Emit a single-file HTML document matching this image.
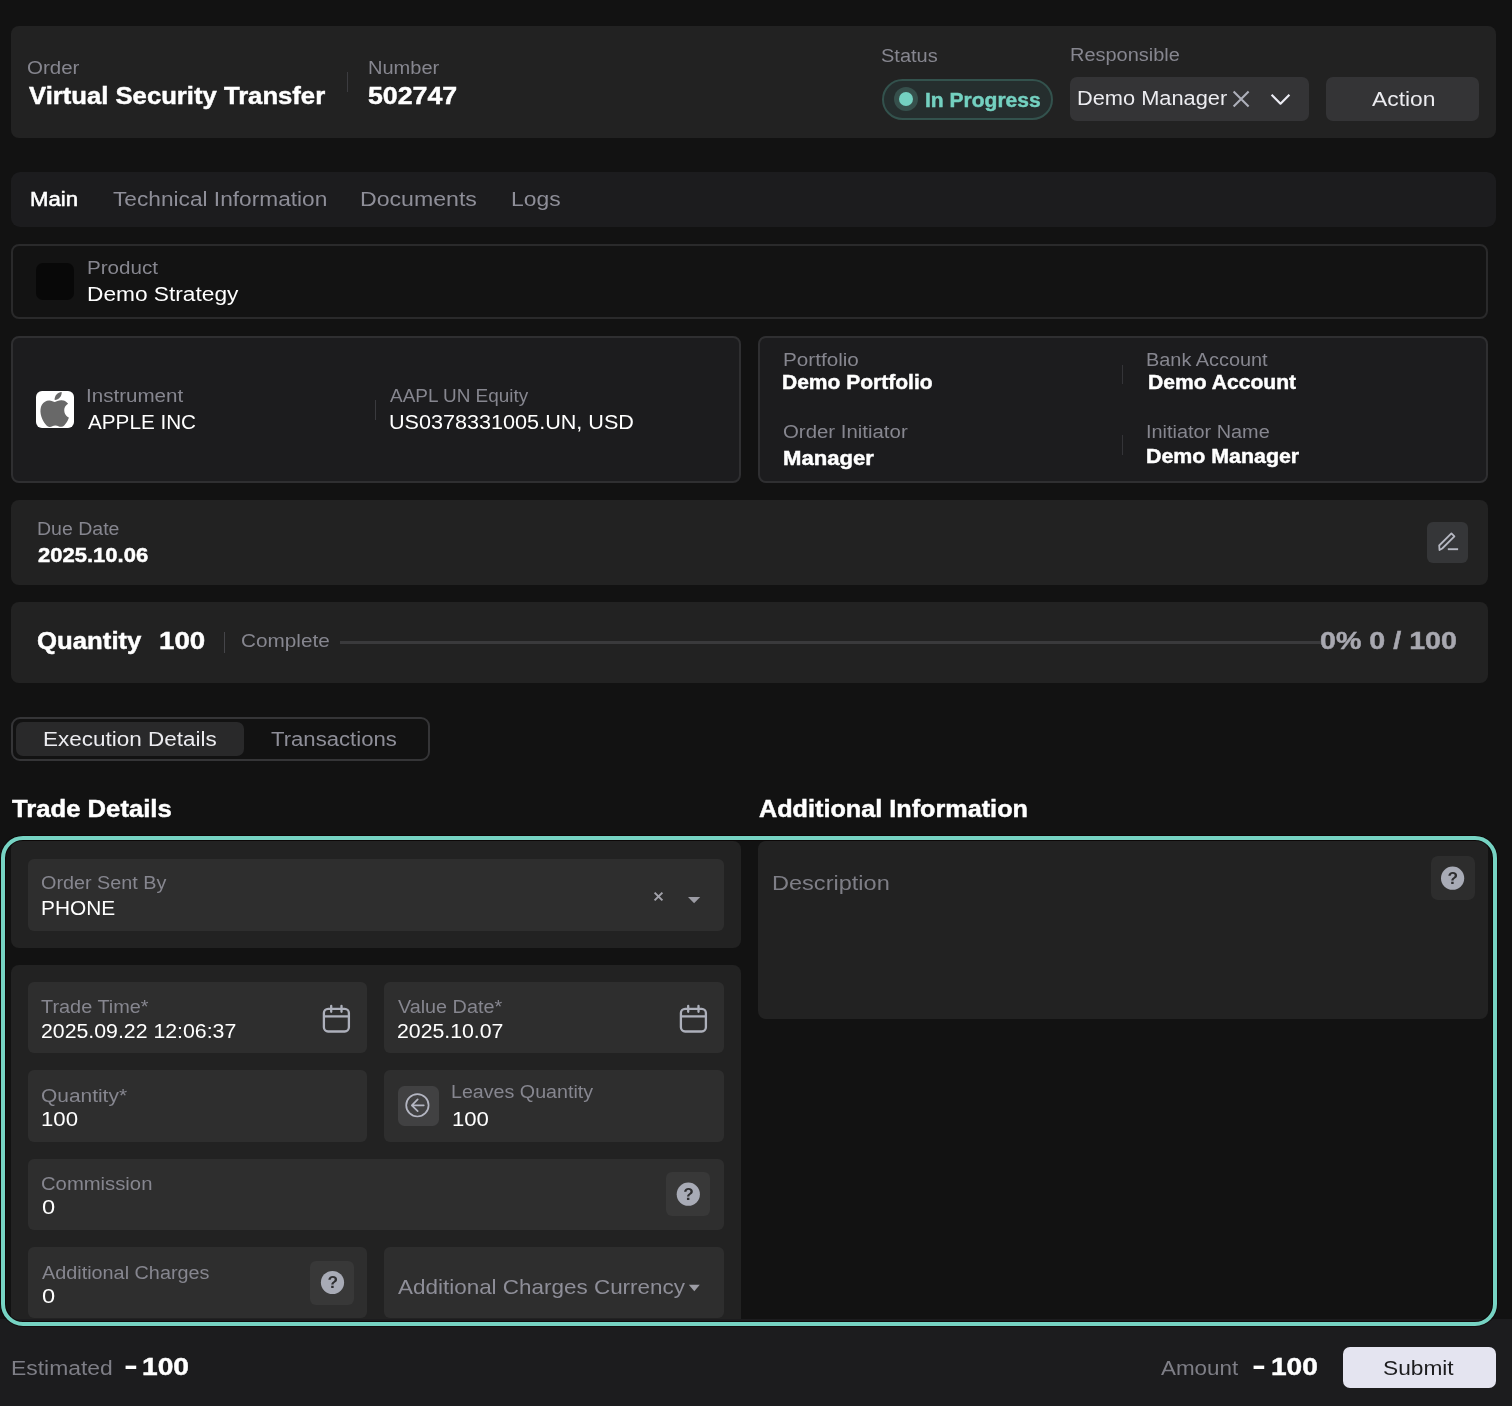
<!DOCTYPE html>
<html lang="en"><head><meta charset="utf-8"><title>Order 502747 - Virtual Security Transfer</title>
<style>
html,body{margin:0;padding:0}
body{width:1512px;height:1406px;background:#121212;position:relative;overflow:hidden;font-family:"Liberation Sans", sans-serif}
.b{position:absolute}
.t{position:absolute;white-space:pre;line-height:1;transform-origin:0 0;font-weight:400}
.ic{position:absolute;left:0;top:0;will-change:transform}
.tx{position:absolute;left:0;top:0;width:1512px;height:1406px;will-change:transform}
</style></head><body>
<div class="b" style="left:11px;top:26px;width:1484.5px;height:111.5px;background:#222222;border-radius:8px;"></div>
<div class="b" style="left:347px;top:72px;width:1px;height:20px;background:#3c3c40;border-radius:0px;"></div>
<div class="b" style="left:882px;top:79px;width:171px;height:41px;background:#252e2e;border-radius:21px;box-sizing:border-box;border:2px solid #33524d"></div>
<div class="b" style="left:894px;top:87px;width:24px;height:24px;background:#36504c;border-radius:12px;"></div>
<div class="b" style="left:898.7px;top:91.7px;width:14.6px;height:14.6px;background:#74d1c1;border-radius:8px;"></div>
<div class="b" style="left:1070px;top:77px;width:239px;height:44px;background:#343436;border-radius:7px;"></div>
<div class="b" style="left:1326px;top:77px;width:153px;height:44px;background:#343436;border-radius:7px;"></div>
<div class="b" style="left:11px;top:172px;width:1484.5px;height:54.5px;background:#1c1c1e;border-radius:9px;"></div>
<div class="b" style="left:11px;top:244px;width:1477px;height:75px;background:#131313;border-radius:8px;box-sizing:border-box;border:2px solid #2a2a2b"></div>
<div class="b" style="left:36px;top:263px;width:38px;height:37px;background:#080808;border-radius:7px;"></div>
<div class="b" style="left:11px;top:336px;width:730px;height:146.5px;background:#1c1c1e;border-radius:8px;box-sizing:border-box;border:2px solid #2f2f31"></div>
<div class="b" style="left:36px;top:391px;width:38px;height:37px;background:#ffffff;border-radius:6px;"></div>
<div class="b" style="left:375px;top:399.5px;width:1px;height:20px;background:#3a3a3e;border-radius:0px;"></div>
<div class="b" style="left:758px;top:336px;width:730px;height:146.5px;background:#1c1c1e;border-radius:8px;box-sizing:border-box;border:2px solid #2f2f31"></div>
<div class="b" style="left:1122px;top:364.5px;width:1px;height:19px;background:#343438;border-radius:0px;"></div>
<div class="b" style="left:1122px;top:435px;width:1px;height:19.5px;background:#343438;border-radius:0px;"></div>
<div class="b" style="left:11px;top:500px;width:1477px;height:84.5px;background:#222222;border-radius:8px;"></div>
<div class="b" style="left:1427px;top:522px;width:41px;height:41px;background:#353638;border-radius:6px;"></div>
<div class="b" style="left:11px;top:602px;width:1477px;height:80.5px;background:#222222;border-radius:8px;"></div>
<div class="b" style="left:223.6px;top:632px;width:1.5px;height:20.5px;background:#454549;border-radius:0px;"></div>
<div class="b" style="left:339.5px;top:641.3px;width:981.5px;height:2.4px;background:#3a3a3c;border-radius:0px;"></div>
<div class="b" style="left:11px;top:717px;width:419px;height:44px;background:transparent;border-radius:9px;box-sizing:border-box;border:2px solid #353537"></div>
<div class="b" style="left:15.5px;top:722px;width:228.5px;height:34px;background:#29292a;border-radius:7px;"></div>
<div class="b" style="left:11px;top:841px;width:730px;height:107px;background:#222222;border-radius:8px;"></div>
<div class="b" style="left:28px;top:859px;width:696px;height:72px;background:#2e2e2e;border-radius:6px;"></div>
<div class="b" style="left:11px;top:965px;width:730px;height:365px;background:#222222;border-radius:8px;"></div>
<div class="b" style="left:28px;top:982px;width:339px;height:70.5px;background:#2e2e2e;border-radius:6px;"></div>
<div class="b" style="left:384px;top:982px;width:340px;height:70.5px;background:#2e2e2e;border-radius:6px;"></div>
<div class="b" style="left:28px;top:1070px;width:339px;height:71.5px;background:#2e2e2e;border-radius:6px;"></div>
<div class="b" style="left:384px;top:1070px;width:340px;height:71.5px;background:#2e2e2e;border-radius:6px;"></div>
<div class="b" style="left:398px;top:1086px;width:41px;height:40px;background:#414142;border-radius:6.5px;"></div>
<div class="b" style="left:28px;top:1159px;width:696px;height:70.5px;background:#2e2e2e;border-radius:6px;"></div>
<div class="b" style="left:666px;top:1172px;width:44px;height:44px;background:#383838;border-radius:6px;"></div>
<div class="b" style="left:28px;top:1247px;width:339px;height:71px;background:#2e2e2e;border-radius:6px;"></div>
<div class="b" style="left:310px;top:1261px;width:44px;height:44px;background:#383838;border-radius:6px;"></div>
<div class="b" style="left:384px;top:1247px;width:340px;height:71px;background:#2e2e2e;border-radius:6px;"></div>
<div class="b" style="left:758px;top:841px;width:730px;height:178px;background:#222222;border-radius:8px;"></div>
<div class="b" style="left:1431px;top:856px;width:44px;height:44px;background:#2d2d2d;border-radius:7px;"></div>
<div class="b" style="left:0px;top:1319px;width:1512px;height:87px;background:#1c1c1e;border-radius:0px;"></div>
<div class="b" style="left:1343px;top:1347px;width:153px;height:41px;background:#e4e4f0;border-radius:7px;"></div>
<div class="b" style="left:1px;top:836px;width:1496.4px;height:490px;background:transparent;border-radius:22px;box-sizing:border-box;border:4.3px solid #76d3c3;box-shadow:inset 0 0 0 1px rgba(8,0,0,.6),0 0 0 1px rgba(8,0,0,.5)"></div>
<svg class="ic" width="1512" height="1406" viewBox="0 0 1512 1406">
<path d="M1233.6 91.5L1248.6 106.5M1248.6 91.5L1233.6 106.5" stroke="#adafba" stroke-width="2.1" fill="none"/>
<path d="M1271.6 94.8L1280.5 103.7L1289.4 94.8" stroke="#ececf4" stroke-width="2.2" stroke-linejoin="round" fill="none"/>
<g transform="translate(37.2 391.9) scale(1.4583)"><path d="M12.152 6.896c-.948 0-2.415-1.078-3.96-1.04-2.04.027-3.91 1.183-4.961 3.014-2.117 3.675-.546 9.103 1.519 12.09 1.013 1.454 2.208 3.09 3.792 3.039 1.52-.065 2.09-.987 3.935-.987 1.831 0 2.35.987 3.96.948 1.637-.026 2.676-1.48 3.676-2.948 1.156-1.688 1.636-3.325 1.662-3.415-.039-.013-3.182-1.221-3.22-4.857-.026-3.04 2.48-4.494 2.597-4.559-1.429-2.09-3.623-2.324-4.39-2.376-2-.156-3.675 1.09-4.61 1.09zM15.53 3.83c.843-1.012 1.4-2.427 1.245-3.83-1.207.052-2.662.805-3.532 1.818-.78.896-1.454 2.338-1.273 3.714 1.338.104 2.715-.688 3.559-1.701" fill="#686868"/></g>
<path d="M1454.4 536.4L1451.4 533.4L1439.2 545.5L1439.5 550L1442.2 548.5Z" fill="none" stroke="#b6b8c2" stroke-width="1.8" stroke-linejoin="round"/>
<path d="M1447.8 549.2H1458.1" stroke="#b6b8c2" stroke-width="1.9"/>
<path d="M654.6 892.6L662.4 900.4M662.4 892.6L654.6 900.4" stroke="#a2a2aa" stroke-width="2" fill="none"/>
<path d="M688 897H700.2L694.1 903.2Z" fill="#9c9ca4"/>
<path d="M688.8 1284.8H699.8L694.3 1291.2Z" fill="#9c9ca4"/>
<g fill="none" stroke="#adb0bb" stroke-width="2.3" stroke-linecap="round"><rect x="323.9" y="1008.9" width="25" height="22.6" rx="4.2"/><path d="M323.9 1016.4H348.9" stroke-linecap="butt"/><path d="M331.2 1006.0V1011.8M341.5 1006.0V1011.8"/></g>
<g fill="none" stroke="#adb0bb" stroke-width="2.3" stroke-linecap="round"><rect x="680.9" y="1008.9" width="25" height="22.6" rx="4.2"/><path d="M680.9 1016.4H705.9" stroke-linecap="butt"/><path d="M688.2 1006.0V1011.8M698.5 1006.0V1011.8"/></g>
<g fill="none" stroke="#b4b6c2" stroke-width="1.7" stroke-linecap="round" stroke-linejoin="round"><circle cx="417.4" cy="1105.3" r="11.2"/><path d="M423.8 1105.3H412M417.7 1099.4L411.8 1105.3L417.7 1111.2"/></g>
<circle cx="688.3" cy="1194.2" r="11.6" fill="#a8abb6"/><text x="688.6" y="1199.7" text-anchor="middle" font-family='"Liberation Sans", sans-serif' font-size="17.3" font-weight="700" fill="#2e2e30">?</text>
<circle cx="332.5" cy="1282.5" r="11.6" fill="#a8abb6"/><text x="332.8" y="1288.0" text-anchor="middle" font-family='"Liberation Sans", sans-serif' font-size="17.3" font-weight="700" fill="#2e2e30">?</text>
<circle cx="1452.6" cy="878.2" r="11.6" fill="#a8abb6"/><text x="1452.9" y="883.7" text-anchor="middle" font-family='"Liberation Sans", sans-serif' font-size="17.3" font-weight="700" fill="#2e2e30">?</text>
</svg>
<div class="tx">
<span class="t" style="left:27.0px;top:59.4px;font-size:18px;color:#86868f;transform:scaleX(1.140)">Order</span>
<span class="t" style="left:28.8px;top:84.0px;font-size:24px;color:#ffffff;transform:scaleX(1.069);font-weight:700;-webkit-text-stroke:0.45px #ffffff">Virtual Security Transfer</span>
<span class="t" style="left:367.6px;top:59.4px;font-size:18px;color:#86868f;transform:scaleX(1.113)">Number</span>
<span class="t" style="left:367.6px;top:84.0px;font-size:24px;color:#ffffff;transform:scaleX(1.114);font-weight:700;-webkit-text-stroke:0.45px #ffffff">502747</span>
<span class="t" style="left:881.4px;top:46.8px;font-size:18px;color:#86868f;transform:scaleX(1.110)">Status</span>
<span class="t" style="left:1069.9px;top:45.9px;font-size:18px;color:#86868f;transform:scaleX(1.108)">Responsible</span>
<span class="t" style="left:924.5px;top:90.2px;font-size:20px;color:#74d1c1;transform:scaleX(1.051);font-weight:700;-webkit-text-stroke:0.45px #74d1c1">In Progress</span>
<span class="t" style="left:1076.9px;top:88.4px;font-size:20px;color:#ececf0;transform:scaleX(1.090)">Demo Manager</span>
<span class="t" style="left:1371.5px;top:89.0px;font-size:20px;color:#ececf0;transform:scaleX(1.142)">Action</span>
<span class="t" style="left:29.5px;top:188.7px;font-size:20px;color:#ffffff;transform:scaleX(1.107);-webkit-text-stroke:0.55px #ffffff">Main</span>
<span class="t" style="left:113.0px;top:188.7px;font-size:20px;color:#8e8e98;transform:scaleX(1.134)">Technical Information</span>
<span class="t" style="left:359.8px;top:188.7px;font-size:20px;color:#8e8e98;transform:scaleX(1.156)">Documents</span>
<span class="t" style="left:511.2px;top:188.7px;font-size:20px;color:#8e8e98;transform:scaleX(1.143)">Logs</span>
<span class="t" style="left:86.6px;top:259.1px;font-size:18px;color:#86868f;transform:scaleX(1.144)">Product</span>
<span class="t" style="left:86.9px;top:284.0px;font-size:20px;color:#ffffff;transform:scaleX(1.135)">Demo Strategy</span>
<span class="t" style="left:86.1px;top:387.1px;font-size:18px;color:#86868f;transform:scaleX(1.143)">Instrument</span>
<span class="t" style="left:88.0px;top:411.9px;font-size:20px;color:#ffffff;transform:scaleX(1.034)">APPLE INC</span>
<span class="t" style="left:389.9px;top:387.1px;font-size:18px;color:#86868f;transform:scaleX(1.052)">AAPL UN Equity</span>
<span class="t" style="left:389.3px;top:411.9px;font-size:20px;color:#ffffff;transform:scaleX(1.080)">US0378331005.UN, USD</span>
<span class="t" style="left:782.7px;top:351.1px;font-size:18px;color:#86868f;transform:scaleX(1.148)">Portfolio</span>
<span class="t" style="left:782.2px;top:372.1px;font-size:20px;color:#ffffff;transform:scaleX(1.051);font-weight:700;-webkit-text-stroke:0.45px #ffffff">Demo Portfolio</span>
<span class="t" style="left:782.7px;top:423.2px;font-size:18px;color:#86868f;transform:scaleX(1.133)">Order Initiator</span>
<span class="t" style="left:782.9px;top:448.0px;font-size:20px;color:#ffffff;transform:scaleX(1.105);font-weight:700;-webkit-text-stroke:0.45px #ffffff">Manager</span>
<span class="t" style="left:1146.1px;top:351.1px;font-size:18px;color:#86868f;transform:scaleX(1.105)">Bank Account</span>
<span class="t" style="left:1148.1px;top:372.1px;font-size:20px;color:#ffffff;transform:scaleX(1.055);font-weight:700;-webkit-text-stroke:0.45px #ffffff">Demo Account</span>
<span class="t" style="left:1146.1px;top:423.2px;font-size:18px;color:#86868f;transform:scaleX(1.104)">Initiator Name</span>
<span class="t" style="left:1146.1px;top:446.1px;font-size:20px;color:#ffffff;transform:scaleX(1.068);font-weight:700;-webkit-text-stroke:0.45px #ffffff">Demo Manager</span>
<span class="t" style="left:37.3px;top:520.1px;font-size:18px;color:#86868f;transform:scaleX(1.084)">Due Date</span>
<span class="t" style="left:38.4px;top:544.6px;font-size:20px;color:#ffffff;transform:scaleX(1.101);font-weight:700;-webkit-text-stroke:0.45px #ffffff">2025.10.06</span>
<span class="t" style="left:37.3px;top:628.8px;font-size:24px;color:#ffffff;transform:scaleX(1.073);font-weight:700;-webkit-text-stroke:0.45px #ffffff">Quantity</span>
<span class="t" style="left:158.5px;top:628.8px;font-size:24px;color:#ffffff;transform:scaleX(1.154);font-weight:700;-webkit-text-stroke:0.45px #ffffff">100</span>
<span class="t" style="left:240.9px;top:632.1px;font-size:18.5px;color:#86868f;transform:scaleX(1.121)">Complete</span>
<span class="t" style="left:1320.1px;top:628.9px;font-size:24px;color:#a8a8b0;transform:scaleX(1.193);font-weight:700;-webkit-text-stroke:0.45px #a8a8b0">0% 0 / 100</span>
<span class="t" style="left:42.9px;top:729.1px;font-size:20px;color:#ececf0;transform:scaleX(1.124)">Execution Details</span>
<span class="t" style="left:271.2px;top:729.1px;font-size:20px;color:#8e8e98;transform:scaleX(1.106)">Transactions</span>
<span class="t" style="left:11.6px;top:797.5px;font-size:23.4px;color:#ffffff;transform:scaleX(1.097);font-weight:700;-webkit-text-stroke:0.45px #ffffff">Trade Details</span>
<span class="t" style="left:758.7px;top:797.5px;font-size:23.4px;color:#ffffff;transform:scaleX(1.078);font-weight:700;-webkit-text-stroke:0.45px #ffffff">Additional Information</span>
<span class="t" style="left:41.0px;top:874.3px;font-size:18px;color:#86868f;transform:scaleX(1.100)">Order Sent By</span>
<span class="t" style="left:41.3px;top:897.9px;font-size:20px;color:#ffffff;transform:scaleX(1.043)">PHONE</span>
<span class="t" style="left:41.0px;top:998.1px;font-size:18px;color:#86868f;transform:scaleX(1.105)">Trade Time*</span>
<span class="t" style="left:40.7px;top:1021.2px;font-size:20px;color:#ffffff;transform:scaleX(1.064)">2025.09.22 12:06:37</span>
<span class="t" style="left:397.9px;top:997.9px;font-size:18px;color:#86868f;transform:scaleX(1.099)">Value Date*</span>
<span class="t" style="left:397.3px;top:1021.2px;font-size:20px;color:#ffffff;transform:scaleX(1.063)">2025.10.07</span>
<span class="t" style="left:40.8px;top:1086.6px;font-size:18px;color:#86868f;transform:scaleX(1.162)">Quantity*</span>
<span class="t" style="left:41.2px;top:1109.2px;font-size:20px;color:#ffffff;transform:scaleX(1.109)">100</span>
<span class="t" style="left:451.4px;top:1083.0px;font-size:18px;color:#86868f;transform:scaleX(1.092)">Leaves Quantity</span>
<span class="t" style="left:451.9px;top:1109.1px;font-size:20px;color:#ffffff;transform:scaleX(1.106)">100</span>
<span class="t" style="left:40.9px;top:1175.0px;font-size:18px;color:#86868f;transform:scaleX(1.125)">Commission</span>
<span class="t" style="left:41.8px;top:1197.1px;font-size:20px;color:#ffffff;transform:scaleX(1.182)">0</span>
<span class="t" style="left:42.0px;top:1264.1px;font-size:18px;color:#86868f;transform:scaleX(1.101)">Additional Charges</span>
<span class="t" style="left:41.8px;top:1286.0px;font-size:20px;color:#ffffff;transform:scaleX(1.182)">0</span>
<span class="t" style="left:398.4px;top:1275.9px;font-size:21px;color:#8e8e98;transform:scaleX(1.069)">Additional Charges Currency</span>
<span class="t" style="left:771.6px;top:873.1px;font-size:20px;color:#7e7e86;transform:scaleX(1.177)">Description</span>
<span class="t" style="left:10.5px;top:1358.2px;font-size:20px;color:#7e7e86;transform:scaleX(1.144)">Estimated</span>
<span class="t" style="left:142.4px;top:1354.8px;font-size:24.3px;color:#ffffff;transform:scaleX(1.159);font-weight:700;-webkit-text-stroke:0.45px #ffffff">100</span>
<span class="t" style="left:1161.2px;top:1358.2px;font-size:20px;color:#7e7e86;transform:scaleX(1.120)">Amount</span>
<span class="t" style="left:1270.5px;top:1354.8px;font-size:24.3px;color:#ffffff;transform:scaleX(1.156);font-weight:700;-webkit-text-stroke:0.45px #ffffff">100</span>
<span class="t" style="left:1383.4px;top:1358.2px;font-size:20px;color:#1c1c1e;transform:scaleX(1.135)">Submit</span>
<span class="t" style="left:124.1px;top:1351.6px;font-size:27.5px;font-weight:700;color:#fff;transform:scaleX(1.51)">-</span>
<span class="t" style="left:1252.1px;top:1351.6px;font-size:27.5px;font-weight:700;color:#fff;transform:scaleX(1.51)">-</span>
</div>
</body></html>
